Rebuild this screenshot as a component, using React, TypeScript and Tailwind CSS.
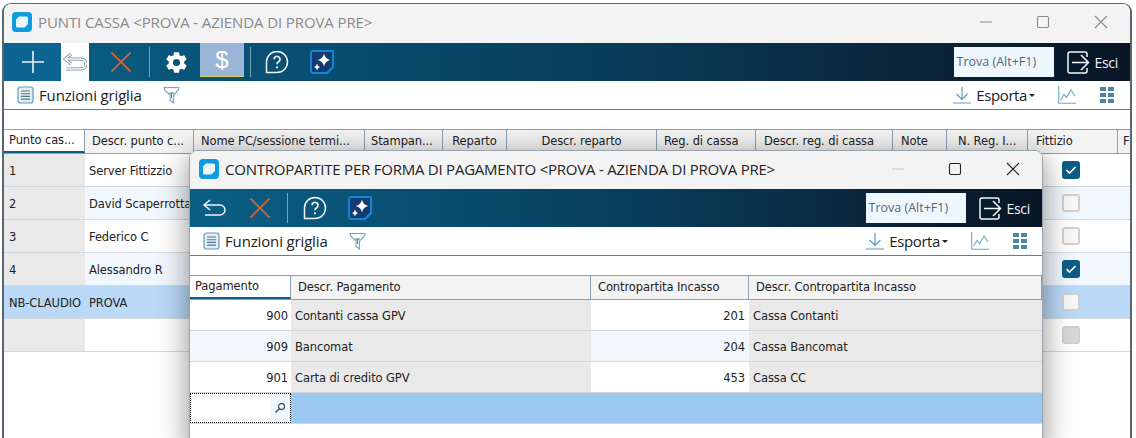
import { IoSettingsSharp } from "react-icons/io5";

const gridFont = "font-['DejaVu_Sans',sans-serif] text-[11.5px] tracking-[-0.1px]";

const Logo = () => (
  <svg width="20" height="20" viewBox="0 0 20 20">
    <rect width="20" height="20" rx="4" fill="#0f9be0" />
    <path d="M7 4.500h7.500a1.500 1.500 0 0 1 1.500 1.500v6l-3.500 3.500h-7a1.500 1.500 0 0 1-1.500-1.500v-6.500z" fill="#fff" opacity="0.92" />
  </svg>
);

const WinControls = ({ dim }: { dim?: boolean }) => (
  <div className={`ml-auto flex items-center ${dim ? "text-[#8a8a8a]" : "text-[#222]"}`}>
    <svg width="14" height="14" viewBox="0 0 14 14" className="mr-[43px]">
      <path d="M1 7h12" stroke={dim ? "#8a8a8a" : "#c4c4c4"} strokeWidth="1" />
    </svg>
    <svg width="14" height="14" viewBox="0 0 14 14" className="mr-[44px]">
      <rect x="1.500" y="1.500" width="11" height="11" rx="1.500" fill="none" stroke="currentColor" strokeWidth="1.100" />
    </svg>
    <svg width="14" height="14" viewBox="0 0 14 14" className="mr-[22px]">
      <path d="M1 1l12 12M13 1L1 13" stroke="currentColor" strokeWidth="1.100" />
    </svg>
  </div>
);

const PlusIcon = () => (
  <svg width="26" height="26" viewBox="0 0 26 26">
    <path d="M13 2v22M2 13h22" stroke="#eef4f8" strokeWidth="1.600" />
  </svg>
);

const CrossIcon = () => (
  <svg width="24" height="24" viewBox="0 0 24 24">
    <path d="M2.500 2.500l19 19M21.500 2.500l-19 19" stroke="#c8663a" strokeWidth="1.800" />
  </svg>
);

const backPath = "M8 2L2 7l6 5M2 7h16a4.500 4.500 0 0 1 0 10H3";

const BackIcon = ({ color }: { color: string }) => (
  <svg width="24" height="20" viewBox="0 0 24 20" fill="none">
    <path d={backPath} stroke={color} strokeWidth="1.500" />
  </svg>
);

// the disabled "back" on the main window is drawn as a hollow outline
const BackOutline = () => (
  <svg width="24" height="20" viewBox="0 0 24 20" fill="none">
    <path d={backPath} stroke="#6f8c9e" strokeWidth="3" />
    <path d={backPath} stroke="#fff" strokeWidth="1.500" />
  </svg>
);

const HelpIcon = () => (
  <svg width="24" height="24" viewBox="0 0 24 24" fill="none">
    <path d="M12 1.500a10.500 10.500 0 0 1 0 21H1.500V12A10.500 10.500 0 0 1 12 1.500z" stroke="#f2f6f9" strokeWidth="1.500" />
    <path d="M9 9.200a3 3 0 1 1 4.600 2.600c-1 .6-1.600 1.100-1.600 2.400" stroke="#f2f6f9" strokeWidth="1.700" />
    <circle cx="12" cy="17.300" r="1.100" fill="#f2f6f9" />
  </svg>
);

const StarIcon = () => (
  <svg width="24" height="24" viewBox="0 0 24 24">
    <path d="M3 1h20v16l-6 6H3a2 2 0 0 1-2-2V3a2 2 0 0 1 2-2z" fill="#123c70" stroke="#1583d8" strokeWidth="2" />
    <path d="M14 3.500Q15 8.800 20.500 10 15 11.200 14 16.500 13 11.200 7.500 10 13 8.800 14 3.500z" fill="#fff" />
    <path d="M7 13.500Q7.500 16.300 10 17 7.500 17.700 7 20.500 6.500 17.700 4 17 6.500 16.300 7 13.500z" fill="#fff" />
  </svg>
);

const ExitIcon = () => (
  <svg width="23" height="23" viewBox="0 0 23 23" fill="none">
    <path d="M20 6V3a2 2 0 0 0-2-2H3a2 2 0 0 0-2 2v17a2 2 0 0 0 2 2h15a2 2 0 0 0 2-2v-3" stroke="#f4f7f9" strokeWidth="1.500" />
    <path d="M5 11.500h16M14 4l7.500 7.500L14 19" stroke="#f4f7f9" strokeWidth="1.500" />
  </svg>
);

const ListIcon = () => (
  <svg width="17" height="18" viewBox="0 0 17 18" fill="none">
    <rect x="1" y="1" width="15" height="16" rx="2.500" fill="#e4eef4" stroke="#5f9db8" strokeWidth="1.200" />
    <path d="M4 5h9M4 7.700h9M4 10.400h9M4 13.100h9" stroke="#52788c" strokeWidth="1.100" />
  </svg>
);

const FilterIcon = () => (
  <svg width="17" height="18" viewBox="0 0 17 18" fill="none">
    <path d="M1 1.500h15l-1 3-4.500 4.500v8l-3.500-2.500V9L2 4.500z" stroke="#6ea8c0" strokeWidth="1.100" />
    <path d="M6 7h5M8.500 7v5" stroke="#4b7f97" strokeWidth="1.100" />
  </svg>
);

const DownloadIcon = () => (
  <svg width="18" height="18" viewBox="0 0 18 18" fill="none">
    <path d="M9 1v12M3.500 8L9 13.500 14.500 8M0 17h18" stroke="#5f9db8" strokeWidth="1.200" />
  </svg>
);

const ChartIcon = () => (
  <svg width="18" height="18" viewBox="0 0 18 18" fill="none">
    <path d="M.7 0v17.300H18" stroke="#6ea8c0" strokeWidth="1.100" />
    <path d="M2.500 14L6 8.500l2.500 3L13 4l4 6" stroke="#6ea8c0" strokeWidth="1.100" />
  </svg>
);

const TilesIcon = () => (
  <div className="grid grid-cols-2 gap-[2px] w-[14px]">
    {[0, 1, 2, 3, 4, 5].map((i) => (
      <div key={i} className="h-[4px] bg-[#4b87a3]" />
    ))}
  </div>
);

const Sep = ({ className }: { className: string }) => (
  <div className={`w-px h-[30px] bg-[#7f9fb4] ${className}`} />
);

const SearchBox = () => (
  <div className="w-[100px] h-[30px] bg-[#eef7fe] flex items-center pl-[3px] font-['Open_Sans',sans-serif] text-[12.5px] text-[#5a6670]">
    Trova (Alt+F1)
  </div>
);

const Esci = () => (
  <div className="flex items-center gap-[5px] text-[#f0f3f6] font-['Open_Sans',sans-serif] text-[14px] tracking-[-0.3px]">
    <ExitIcon />
    Esci
  </div>
);

const SubToolbar = ({ compact }: { compact?: boolean }) => (
  <div className="h-[29px] bg-white border-b border-[#777] flex items-center pl-[13px] text-[15px] text-[#222] font-['Open_Sans',sans-serif] tracking-[-0.15px]">
    <ListIcon />
    <span className="ml-[5px]">Funzioni griglia</span>
    <span className="ml-[21px]">
      <FilterIcon />
    </span>
    <div className={`ml-auto flex items-center ${compact ? "mr-[15px]" : "mr-[16px]"}`}>
      <DownloadIcon />
      <span className="ml-[5px] tracking-[-0.4px]">Esporta</span>
      <span className="ml-[2px] mt-[1px] border-x-[3px] border-t-[3px] border-x-transparent border-t-[#222]" />
      <span className="ml-[23px]">
        <ChartIcon />
      </span>
      <span className="ml-[24px]">
        <TilesIcon />
      </span>
    </div>
  </div>
);

const mainHead = [
  { label: "Punto cas...", cls: "w-[81px] pl-[5px] bg-white border-b-[2px] border-b-[#0e5c85]" },
  { label: "Descr. punto c...", cls: "w-[109px] pl-[7px]" },
  { label: "Nome PC/sessione termi...", cls: "w-[171px] pl-[7px]" },
  { label: "Stampan...", cls: "w-[78px] pl-[6px]" },
  { label: "Reparto", cls: "w-[64px] justify-center" },
  { label: "Descr. reparto", cls: "w-[150px] justify-center" },
  { label: "Reg. di cassa", cls: "w-[99px] pl-[7px]" },
  { label: "Descr. reg. di cassa", cls: "w-[137px] pl-[8px]" },
  { label: "Note", cls: "w-[54px] pl-[8px]" },
  { label: "N. Reg. I...", cls: "w-[81px] pl-[11px]" },
  { label: "Fittizio", cls: "w-[90px] pl-[8px]" },
  { label: "F", cls: "w-[20px] pl-[5px]" },
];

const mainRows = [
  { id: "1", name: "Server Fittizzio", check: true },
  { id: "2", name: "David Scaperrotta", check: false, alt: true },
  { id: "3", name: "Federico C", check: false },
  { id: "4", name: "Alessandro R", check: true, alt: true },
  { id: "NB-CLAUDIO", name: "PROVA", check: false, selected: true },
  { id: "", name: "", check: false, last: true },
];

const Check = ({ on, disabled }: { on: boolean; disabled?: boolean }) => {
  if (on) {
    return (
      <div className="w-[18px] h-[18px] rounded-[3px] bg-[#0e5c85] flex items-center justify-center">
        <svg width="12" height="10" viewBox="0 0 12 10" fill="none">
          <path d="M1.500 5l3 3 6-6" stroke="#fff" strokeWidth="1.600" />
        </svg>
      </div>
    );
  }
  return (
    <div className={`w-[18px] h-[18px] rounded-[3px] border-2 border-[#d0d0d0] ${disabled ? "bg-[#d8d8d8]" : "bg-[#f7f7f7]"}`} />
  );
};

const MainGrid = () => (
  <div className={`${gridFont} text-[#222]`}>
    <div className="flex h-[25px] border-y border-[#8ba0b4] bg-[#f3f3f3]">
      {mainHead.map((h) => (
        <div key={h.label} className={`shrink-0 h-[23px] flex items-center whitespace-nowrap overflow-hidden border-r border-[#8ba0b4] ${h.cls}`}>
          {h.label}
        </div>
      ))}
    </div>
    {mainRows.map((r, i) => (
      <div key={i} className={`flex h-[33px] border-b border-[#d4d8dc] ${r.selected ? "bg-[#b9d9f7]" : r.alt ? "bg-[#f1f8fd]" : "bg-white"}`}>
        <div className={`w-[81px] shrink-0 flex items-center pl-[5px] pt-[4px] ${r.selected ? "" : "bg-[#e9e9e9]"}`}>{r.id}</div>
        <div className="flex-1 flex items-center pl-[4px] pt-[4px] whitespace-nowrap">{r.name}</div>
        <div className="w-[68px] shrink-0 flex items-center">
          <Check on={r.check} disabled={r.last} />
        </div>
      </div>
    ))}
  </div>
);

const dlgCols = ["w-[101px]", "w-[300px]", "w-[158px]", "flex-1"];
const dlgHead = [
  { label: "Pagamento", cls: "pl-[5px] bg-white border-b-[2px] border-b-[#0e5c85]" },
  { label: "Descr. Pagamento", cls: "pl-[7px]" },
  { label: "Contropartita Incasso", cls: "pl-[7px]" },
  { label: "Descr. Contropartita Incasso", cls: "pl-[7px]" },
];
const dlgRows = [
  ["900", "Contanti cassa GPV", "201", "Cassa Contanti"],
  ["909", "Bancomat", "204", "Cassa Bancomat"],
  ["901", "Carta di credito GPV", "453", "Cassa CC"],
];

const DialogGrid = () => (
  <div className={`${gridFont} text-[#222]`}>
    <div className="flex h-[25px] border-y border-[#8ba0b4] bg-[#f3f3f3]">
      {dlgHead.map((h, i) => (
        <div key={h.label} className={`${dlgCols[i]} h-[23px] flex items-center border-r border-[#8ba0b4] ${h.cls}`}>
          {h.label}
        </div>
      ))}
    </div>
    {dlgRows.map((r, i) => (
      <div key={r[0]} className="flex h-[31px] border-b border-[#d4d8dc]">
        <div className={`${dlgCols[0]} flex items-center justify-end pr-[3px] pt-[4px] ${i === 1 ? "bg-[#f1f8fd]" : "bg-white"}`}>{r[0]}</div>
        <div className={`${dlgCols[1]} flex items-center pl-[4px] pt-[4px] bg-[#e9e9e9]`}>{r[1]}</div>
        <div className={`${dlgCols[2]} flex items-center justify-end pr-[4px] pt-[4px] ${i === 1 ? "bg-[#f1f8fd]" : "bg-white"}`}>{r[2]}</div>
        <div className={`${dlgCols[3]} flex items-center pl-[4px] pt-[4px] bg-[#e9e9e9]`}>{r[3]}</div>
      </div>
    ))}
    <div className="flex h-[31px] border-b border-[#d4d8dc] bg-[#9bc9f1]">
      <div className="w-[101px] bg-white border border-dotted border-black flex items-center justify-end">
        <div className="w-[20px] h-full bg-[#f1f8fd] flex items-center justify-center">
          <svg width="12" height="12" viewBox="0 0 12 12" fill="none">
            <circle cx="7.500" cy="4.500" r="3" stroke="#4a5a66" strokeWidth="1.300" />
            <path d="M5.300 6.700L1.500 10.500" stroke="#4a5a66" strokeWidth="1.600" />
          </svg>
        </div>
      </div>
    </div>
  </div>
);

const Dialog = () => (
  <div className="absolute left-[189px] top-[150px] w-[854px] h-[300px] bg-white rounded-t-[8px] border border-[#9aa4ac] overflow-hidden shadow-[0_6px_30px_rgba(0,0,0,0.45)]">
    <div className="h-[38px] bg-[#f3f3f3] flex items-center pl-[9px] pb-[2px]">
      <Logo />
      <span className="ml-[6px] font-['Open_Sans',sans-serif] text-[15px] text-[#222] tracking-[-0.23px] whitespace-nowrap">
        CONTROPARTITE PER FORMA DI PAGAMENTO &lt;PROVA - AZIENDA DI PROVA PRE&gt;
      </span>
      <WinControls />
    </div>
    <div className="h-[38px] bg-gradient-to-r from-[#0b5f86] via-[#07405f] to-[#081525] flex items-center">
      <span className="ml-[12px]"><BackIcon color="#eef4f8" /></span>
      <span className="ml-[22px]"><CrossIcon /></span>
      <Sep className="ml-[15px]" />
      <span className="ml-[15px]"><HelpIcon /></span>
      <span className="ml-[21px]"><StarIcon /></span>
      <div className="ml-auto flex items-center mr-[12px] gap-[13px]">
        <SearchBox />
        <Esci />
      </div>
    </div>
    <SubToolbar compact />
    <div className="h-[19px] bg-white" />
    <DialogGrid />
  </div>
);

export default function App() {
  return (
    <div className="relative w-[1136px] h-[438px] overflow-hidden bg-white">
      <div className="ml-[2px] mt-[3px] w-[1130px] h-[460px] bg-white rounded-t-[9px] border-2 border-b-0 border-[#5b6670] border-t-[1px] overflow-hidden">
        <div className="h-[39px] bg-[#f3f3f3] flex items-center pl-[8px] pb-[3px]">
          <Logo />
          <span className="ml-[6px] font-['Open_Sans',sans-serif] text-[15px] text-[#8a8a8a] tracking-[-0.1px] whitespace-nowrap">
            PUNTI CASSA &lt;PROVA - AZIENDA DI PROVA PRE&gt;
          </span>
          <WinControls dim />
        </div>
        <div className="h-[38px] bg-gradient-to-r from-[#0b5f86] via-[#07405f] to-[#081525] flex items-center">
          <div className="w-[57px] h-full bg-[#0b6590] flex items-center justify-center">
            <PlusIcon />
          </div>
          <div className="w-[28px] h-full bg-white flex items-center justify-center">
            <BackOutline />
          </div>
          <span className="ml-[20px]"><CrossIcon /></span>
          <Sep className="ml-[16px]" />
          <span className="ml-[12px] w-[28px] flex items-center justify-center text-white">
            <IoSettingsSharp size={23} />
          </span>
          <div className="ml-[10px] w-[44px] h-[34px] self-start bg-[#9ab6d6] border-b border-[#e0d25a] flex items-center justify-center text-white text-[24px] font-['Liberation_Sans',sans-serif]">
            $
          </div>
          <Sep className="ml-[6px]" />
          <span className="ml-[14px]"><HelpIcon /></span>
          <span className="ml-[21px]"><StarIcon /></span>
          <div className="ml-auto flex items-center mr-[12px] gap-[13px]">
            <SearchBox />
            <Esci />
          </div>
        </div>
        <SubToolbar />
        <div className="h-[19px] bg-white" />
        <MainGrid />
      </div>
      <Dialog />
    </div>
  );
}
